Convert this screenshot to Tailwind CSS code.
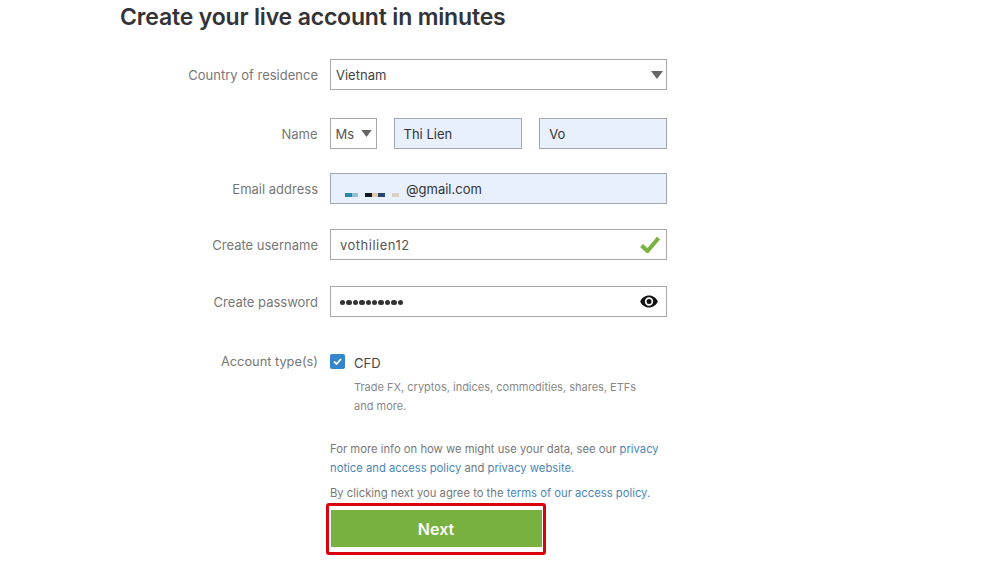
<!DOCTYPE html>
<html lang="en">
<head>
    <meta charset="UTF-8">
    <title>Create your live account</title>
    <script src="https://cdn.jsdelivr.net/npm/@tailwindcss/browser@4"></script>
</head>
<body class="bg-white h-[565px] w-[1000px] overflow-hidden font-['Inter',sans-serif]">
    <div class="pl-[120px] pt-[3px]">
        <h1 class="h-[28px] text-[23px] leading-[28px] font-semibold text-[#333338] tracking-[-0.17px]">Create your live account in minutes</h1>

        <form class="mt-[28px] w-[547px] text-[13px]">
            <!-- country -->
            <div class="flex items-center h-[31px]">
                <label class="w-[198px] pt-[2px] text-right text-[#777]">Country of residence</label>
                <div class="ml-[12px] w-[337px] h-full border border-[#a8a8a8] flex items-center justify-between pl-[5px] pr-[3px] text-[#444]">
                    <span class="pt-[3px]">Vietnam</span>
                    <svg class="w-[12px] h-[8px]" viewBox="0 0 12 8"><path d="M0 0h12L6 8z" fill="#666"/></svg>
                </div>
            </div>

            <!-- name -->
            <div class="flex items-center h-[31px] mt-[28px]">
                <label class="w-[198px] pt-[2px] text-right text-[#777]">Name</label>
                <div class="ml-[12px] w-[47px] h-full border border-[#a8a8a8] flex items-center justify-between pl-[5px] pr-[4px] text-[#555]">
                    <span class="pt-[3px]">Ms</span>
                    <svg class="w-[11px] h-[7px]" viewBox="0 0 12 8"><path d="M0 0h12L6 8z" fill="#666"/></svg>
                </div>
                <div class="ml-[17px] w-[129px] h-full border border-[#a3a8b0] bg-[#e8f0fe] flex items-center pl-[9px] pt-[2px] text-[#333]">Thi Lien</div>
                <div class="ml-[17px] w-[128px] h-full border border-[#a3a8b0] bg-[#e8f0fe] flex items-center pl-[9px] pt-[2px] text-[#333]">Vo</div>
            </div>

            <!-- email -->
            <div class="flex items-center h-[31px] mt-[24px]">
                <label class="w-[198px] pt-[2px] text-right text-[#777]">Email address</label>
                <div class="ml-[12px] w-[337px] h-full border border-[#a3a8b0] bg-[#e8f0fe] flex items-center text-[#333]">
                    <div class="ml-[14px] mt-[12px] flex w-[60px] h-[4px] shrink-0">
                        <span class="w-[7px] bg-[#2a86a8]"></span>
                        <span class="w-[6px] bg-[#8fc0d6]"></span>
                        <span class="w-[7px]"></span>
                        <span class="w-[7px] bg-[#111827]"></span>
                        <span class="w-[6px] bg-[#e0c9a6]"></span>
                        <span class="w-[7px] bg-[#27466e]"></span>
                        <span class="w-[7px]"></span>
                        <span class="w-[7px] bg-[#d8d0c4]"></span>
                    </div>
                    <span class="pt-[3px] ml-[1px]">@gmail.com</span>
                </div>
            </div>

            <!-- username -->
            <div class="flex items-center h-[31px] mt-[25px]">
                <label class="w-[198px] pt-[2px] text-right text-[#777]">Create username</label>
                <div class="ml-[12px] w-[337px] h-full border border-[#a8a8a8] flex items-center justify-between pl-[9px] pr-[6px] text-[#555]">
                    <span class="pt-[2px] tracking-[0.5px]">vothilien12</span>
                    <svg class="w-[20px] h-[17px]" viewBox="0 0 20 17"><path d="M1.500 9.500 7.500 15 18.500 2" fill="none" stroke="#7ab342" stroke-width="4.200"/></svg>
                </div>
            </div>

            <!-- password -->
            <div class="flex items-center h-[31px] mt-[26px]">
                <label class="w-[198px] pt-[2px] text-right text-[#777]">Create password</label>
                <div class="ml-[12px] w-[337px] h-full border border-[#a8a8a8] flex items-center justify-between pl-[9px] pr-[8px]">
                    <span class="flex gap-[1px] pt-[2px]">
                        <i class="w-[5.4px] h-[5.4px] rounded-full bg-[#333]"></i><i class="w-[5.4px] h-[5.4px] rounded-full bg-[#333]"></i><i class="w-[5.4px] h-[5.4px] rounded-full bg-[#333]"></i><i class="w-[5.4px] h-[5.4px] rounded-full bg-[#333]"></i><i class="w-[5.4px] h-[5.4px] rounded-full bg-[#333]"></i><i class="w-[5.4px] h-[5.4px] rounded-full bg-[#333]"></i><i class="w-[5.4px] h-[5.4px] rounded-full bg-[#333]"></i><i class="w-[5.4px] h-[5.4px] rounded-full bg-[#333]"></i><i class="w-[5.4px] h-[5.4px] rounded-full bg-[#333]"></i><i class="w-[5.4px] h-[5.4px] rounded-full bg-[#333]"></i>
                    </span>
                    <svg class="w-[18px] h-[13px]" viewBox="0 0 18 13"><path fill-rule="evenodd" fill="#111" d="M9 0.500C5 0.500 1.700 3 0.200 6.500 1.700 10 5 12.500 9 12.500s7.300-2.500 8.800-6C16.300 3 13 0.500 9 0.500zM9 2.300a4.200 4.200 0 1 1 0 8.400 4.200 4.200 0 0 1 0-8.400zM9 4a2.500 2.500 0 1 0 0 5 2.500 2.500 0 0 0 0-5z"/></svg>
                </div>
            </div>

            <!-- account type -->
            <div class="flex mt-[36px]">
                <label class="w-[198px] pt-[1px] text-right text-[#777] leading-[16px] text-[12.8px]">Account type(s)</label>
                <div class="ml-[12px] w-[337px]">
                    <div class="flex items-center h-[16px]">
                        <span class="w-[15px] h-[15px] rounded-[2px] bg-[#3585cc] flex items-center justify-center">
                            <svg class="w-[9px] h-[7px]" viewBox="0 0 9 7"><path d="M1 3.500 3.500 6 8 1" fill="none" stroke="#fff" stroke-width="1.800"/></svg>
                        </span>
                        <span class="ml-[9px] mt-[6px] text-[#444]">CFD</span>
                    </div>
                    <p class="ml-[24px] mt-[9px] w-[300px] text-[11px] leading-[19px] text-[#888]">Trade FX, cryptos, indices, commodities, shares, ETFs and more.</p>

                    <p class="mt-[24px] w-[337px] text-[11.25px] leading-[19px] text-[#777]">For more info on how we might use your data, see our <a class="text-[#4a86b8]">privacy</a> <a class="text-[#4a86b8]">notice and access policy</a> and <a class="text-[#4a86b8]">privacy website.</a></p>
                    <p class="mt-[6px] text-[11.25px] leading-[19px] text-[#777]">By clicking next you agree to the <a class="text-[#4a86b8]">terms of our access policy.</a></p>
                </div>
            </div>

            <!-- next -->
            <div class="ml-[206px] w-[220px] h-[52px] border-[3px] border-[#d9020f] rounded-[3px] flex items-center justify-center">
                <button type="button" class="-mt-[2px] pt-[2px] w-[211px] h-[37px] bg-[#78b13f] text-white text-[16px] font-semibold">Next</button>
            </div>
        </form>
    </div>
</body>
</html>
